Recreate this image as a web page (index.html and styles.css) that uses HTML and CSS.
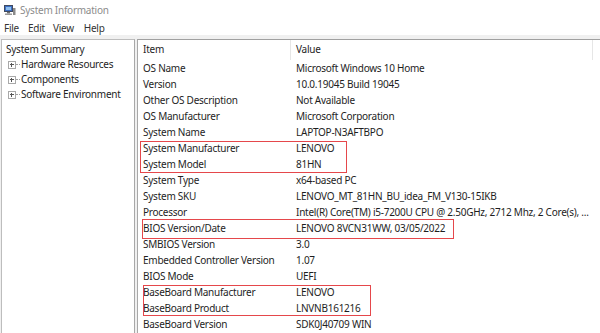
FILE: index.html
```html
<!DOCTYPE html>
<html>
<head>
<meta charset="utf-8">
<link rel="stylesheet" href="styles.css">
</head>
<body>
<div class="window">
  <div class="titlebar">
    <svg class="appicon" width="12" height="12" viewBox="0 0 12 12">
      <rect x="0.5" y="1.5" width="8" height="6" fill="#3c6fc4" stroke="#404a60" stroke-width="1"/>
      <rect x="2" y="3" width="5" height="3" fill="#8fc0f0"/>
      <rect x="3" y="8" width="3" height="1.5" fill="#707070"/>
      <rect x="1" y="9.5" width="7" height="1.5" fill="#9a9a9a"/>
      <rect x="9" y="4" width="2.5" height="7" fill="#8a8a8a"/>
    </svg>
    <span class="title">System Information</span>
  </div>
  <div class="menubar">
    <span class="menu m-file">File</span>
    <span class="menu m-edit">Edit</span>
    <span class="menu m-view">View</span>
    <span class="menu m-help">Help</span>
  </div>
  <div class="main">
    <div class="tree">
      <div class="tnode root">System Summary</div>
      <div class="tnode child"><span class="exp"></span><span class="dots"></span>Hardware Resources</div>
      <div class="tnode child"><span class="exp"></span><span class="dots"></span>Components</div>
      <div class="tnode child"><span class="exp"></span><span class="dots"></span>Software Environment</div>
    </div>
    <div class="list">
      <div class="header">
        <div class="hcell hitem">Item</div>
        <div class="hcell hvalue">Value</div>
        <div class="hcell hdesc"></div>
      </div>
      <div class="rows">
        <div class="row"><span>OS Name</span><span>Microsoft Windows 10 Home</span></div>
        <div class="row"><span>Version</span><span>10.0.19045 Build 19045</span></div>
        <div class="row"><span>Other OS Description</span><span>Not Available</span></div>
        <div class="row"><span>OS Manufacturer</span><span>Microsoft Corporation</span></div>
        <div class="row"><span>System Name</span><span>LAPTOP-N3AFTBPO</span></div>
        <div class="row"><span>System Manufacturer</span><span>LENOVO</span></div>
        <div class="row"><span>System Model</span><span>81HN</span></div>
        <div class="row"><span>System Type</span><span>x64-based PC</span></div>
        <div class="row"><span>System SKU</span><span>LENOVO_MT_81HN_BU_idea_FM_V130-15IKB</span></div>
        <div class="row"><span>Processor</span><span>Intel(R) Core(TM) i5-7200U CPU @ 2.50GHz, 2712 Mhz, 2 Core(s), ...</span></div>
        <div class="row"><span>BIOS Version/Date</span><span>LENOVO 8VCN31WW, 03/05/2022</span></div>
        <div class="row"><span>SMBIOS Version</span><span>3.0</span></div>
        <div class="row"><span>Embedded Controller Version</span><span>1.07</span></div>
        <div class="row"><span>BIOS Mode</span><span>UEFI</span></div>
        <div class="row"><span>BaseBoard Manufacturer</span><span>LENOVO</span></div>
        <div class="row"><span>BaseBoard Product</span><span>LNVNB161216</span></div>
        <div class="row"><span>BaseBoard Version</span><span>SDK0J40709 WIN</span></div>
      </div>
      <div class="mark mark-system"></div>
      <div class="mark mark-bios"></div>
      <div class="mark mark-board"></div>
    </div>
  </div>
</div>
</body>
</html>
```

FILE: styles.css
```css
* { box-sizing: border-box; }
html, body { margin: 0; padding: 0; }
body {
  width: 600px;
  height: 333px;
  overflow: hidden;
  background: #ffffff;
  font-family: "Noto Sans", "Open Sans", sans-serif;
  font-size: 10px;
  letter-spacing: -0.25px;
  color: #1e1e1e;
}
.window { display: flex; flex-direction: column; height: 333px; }
.titlebar {
  height: 20px;
  display: flex;
  align-items: center;
  padding-left: 4px;
  gap: 4px;
}
.appicon { display: block; }
.title { color: #8c8c8c; }
.menubar {
  height: 15px;
  display: flex;
  align-items: center;
  padding-left: 4px;
  color: #333;
}
.m-file { margin-right: 9px; }
.m-edit { margin-right: 8px; }
.m-view { margin-right: 10px; }
.main {
  flex: 1;
  background: #f0f0f0;
  display: flex;
  gap: 2px;
  padding: 4px 0 0 1px;
  min-height: 0;
}
.tree {
  width: 134px;
  background: #fff;
  border: 1px solid #bdbdbd;
  border-right-color: #a8a8a8;
  border-bottom: none;
  padding-top: 2px;
}
.tnode {
  height: 15px;
  line-height: 15px;
  white-space: nowrap;
  display: flex;
  align-items: center;
}
.root { padding-left: 4px; }
.child { padding-left: 6px; }
.exp {
  width: 8px;
  height: 8px;
  border: 1px solid #a9a9a9;
  position: relative;
  flex: none;
}
.exp::before {
  content: "";
  position: absolute;
  left: 1px; top: 2px;
  width: 4px; height: 1px;
  background: #555;
}
.exp::after {
  content: "";
  position: absolute;
  left: 2px; top: 1px;
  width: 1px; height: 4px;
  background: #555;
}
.dots {
  width: 4px;
  border-top: 1px dotted #a0a0a0;
  margin-right: 1px;
  flex: none;
}
.list {
  flex: 1;
  position: relative;
  background: #fff;
  border-left: 1px solid #a8a8a8;
  border-top: 1px solid #a0a0a0;
  overflow: hidden;
}
.header {
  height: 20px;
  display: grid;
  grid-template-columns: 153px 302px 1fr;
  align-items: stretch;
}
.hcell {
  padding-left: 5px;
  line-height: 19px;
  white-space: nowrap;
}
.hitem { border-right: 1px solid #e6e6e6; }
.hvalue { border-right: 1px solid #e6e6e6; }
.rows { padding-left: 5px; }
.row {
  height: 16px;
  line-height: 16px;
  display: grid;
  grid-template-columns: 153px 1fr;
  white-space: nowrap;
}
.mark {
  position: absolute;
  border: 1px solid #e5474b;
}
.mark-system { left: 2px; top: 101px; width: 207px; height: 32px; }
.mark-bios { left: 4px; top: 179px; width: 312px; height: 20px; }
.mark-board { left: 5px; top: 245px; width: 228px; height: 31px; }
```
